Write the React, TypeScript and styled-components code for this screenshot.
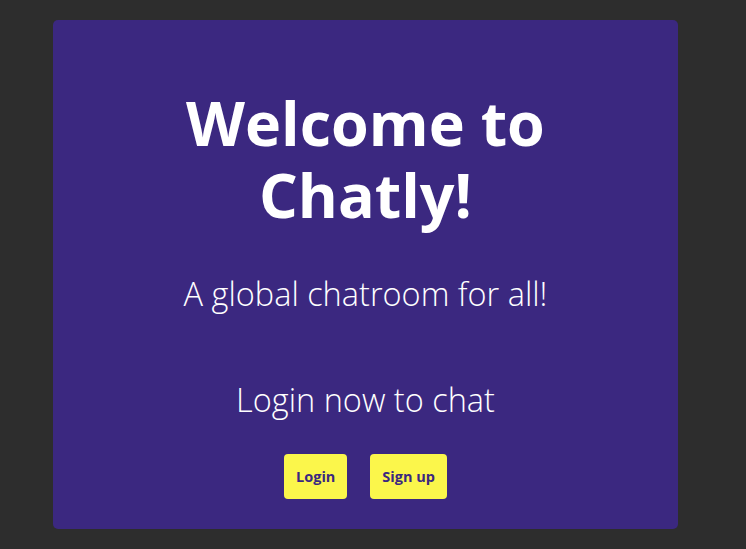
import React from "react";
import styled, { createGlobalStyle } from "styled-components";

const Global = createGlobalStyle`
  html, body { margin: 0; padding: 0; background: #2d2d2d; }
  body { font-family: "Open Sans", "Noto Sans", sans-serif; }
`;

const Page = styled.div`
  padding: 20px 0 0 53px;
  min-height: 549px;
  box-sizing: border-box;
`;

const Card = styled.main`
  width: 625px;
  height: 509px;
  box-sizing: border-box;
  background: #3b2880;
  border-radius: 5px;
  display: flex;
  flex-direction: column;
  align-items: center;
  padding-top: 67px;
  color: #ffffff;
  text-align: center;
`;

const Title = styled.h1`
  margin: 0;
  font-size: 61px;
  font-weight: 700;
  line-height: 72px;
  width: 420px;
`;

const Tagline = styled.p<{ $top: number }>`
  margin: ${(p) => p.$top}px 0 0;
  font-size: 32.5px;
  font-weight: 300;
  line-height: 40px;
`;

const Actions = styled.div`
  display: flex;
  gap: 23px;
  margin-top: 34px;
`;

const Button = styled.button`
  height: 45px;
  padding: 0 12px;
  border: none;
  border-radius: 4px;
  background: #fbf64b;
  color: #3b2880;
  font-family: inherit;
  font-size: 14.5px;
  font-weight: 700;
  cursor: pointer;
`;

export default function App() {
  return (
    <>
      <Global />
      <Page>
        <Card>
          <Title>Welcome to Chatly!</Title>
          <Tagline $top={43}>A global chatroom for all!</Tagline>
          <Tagline $top={66}>Login now to chat</Tagline>
          <Actions>
            <Button>Login</Button>
            <Button>Sign up</Button>
          </Actions>
        </Card>
      </Page>
    </>
  );
}
